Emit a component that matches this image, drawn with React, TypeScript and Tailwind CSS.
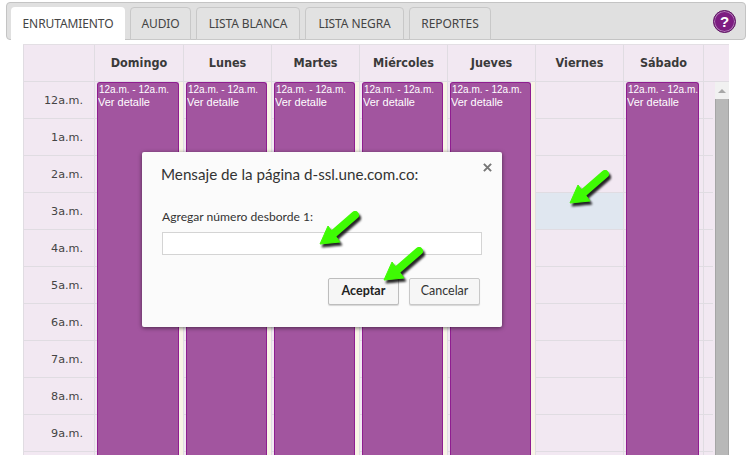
import React from "react";

const hours = ["12a.m.", "1a.m.", "2a.m.", "3a.m.", "4a.m.", "5a.m.", "6a.m.", "7a.m.", "8a.m.", "9a.m.", ""];
const days = [
  { name: "Domingo", w: "w-[89px]", ev: "w-[82px]", on: true, cream: true },
  { name: "Lunes", w: "w-[88px]", ev: "w-[81px]", on: true, cream: true },
  { name: "Martes", w: "w-[88px]", ev: "w-[81px]", on: true, cream: true },
  { name: "Miércoles", w: "w-[88px]", ev: "w-[81px]", on: true, cream: true },
  { name: "Jueves", w: "w-[88px]", ev: "w-[81px]", on: true, cream: true },
  { name: "Viernes", w: "w-[88px]", ev: "", on: false, cream: false },
  { name: "Sábado", w: "w-[80px]", ev: "w-[73px]", on: true, cream: false },
];
const tabs = [
  { t: "AUDIO", w: "w-[61px]" },
  { t: "LISTA BLANCA", w: "w-[104px]" },
  { t: "LISTA NEGRA", w: "w-[99px]" },
  { t: "REPORTES", w: "w-[82px]" },
];

function Arrow({ className }: { className: string }) {
  return (
    <svg
      viewBox="0 0 42 38"
      className={"absolute w-[42px] h-[38px] drop-shadow-[2px_3px_1px_rgba(0,0,0,0.85)] " + className}
    >
      <path d="M9 17 L21 33 L1 35 Z" fill="#3ffb04" stroke="#3ffb04" strokeWidth="1" strokeLinejoin="round" />
      <path d="M13 26 L36 6" fill="none" stroke="#3ffb04" strokeWidth="8" strokeLinecap="round" />
    </svg>
  );
}

export default function App() {
  return (
    <div className="relative w-[753px] h-[455px] overflow-hidden bg-white pt-[2px] font-['Liberation_Sans',sans-serif]">
      {/* tab bar */}
      <div className="ml-[6px] w-[740px] h-[38px] flex items-end gap-[5px] pl-[4px] pr-[8px] bg-[#e0e0e0] border border-[#c4c4c4] rounded-[4px]">
        <div className="w-[114px] h-[33px] -mb-px bg-white rounded-t-[4px] flex items-center justify-center text-[12px] tracking-[-0.1px] text-[#444] font-['Noto_Sans',sans-serif]">
          ENRUTAMIENTO
        </div>
        {tabs.map((t) => (
          <div
            key={t.t}
            className={"h-[33px] -mb-px bg-[#e2e2e2] border border-[#c8c8c8] rounded-t-[4px] flex items-center justify-center text-[12px] tracking-[-0.1px] text-[#444] font-['Noto_Sans',sans-serif] " + t.w}
          >
            {t.t}
          </div>
        ))}
        <div className="ml-auto mb-[6px] mr-[1px] w-[23px] h-[23px] rounded-full bg-[#7d1d82] border border-[#5d1562] shadow-[inset_0_0_0_1px_#b07ab5] flex items-center justify-center text-white font-bold text-[15px] leading-none">
          ?
        </div>
      </div>

      {/* calendar */}
      <div className="ml-[23px] mt-[4px] w-[706px] bg-[#f2e8f2] border-t border-[#e3dfe4]">
        <div className="flex h-[37px] border-b border-[#e0dce2] font-['DejaVu_Sans_Condensed','DejaVu_Sans',sans-serif] text-[12.5px] font-bold text-[#3a3a3a]">
          <div className="w-[71px] border-l border-[#e0dce2]" />
          {days.map((d) => (
            <div key={d.name} className={"flex items-center justify-center pt-[1px] border-l border-[#e0dce2] " + d.w}>
              {d.name}
            </div>
          ))}
          <div className="w-[26px] border-l border-[#e0dce2]" />
        </div>
        <div className="flex">
          <div className="w-[71px] border-l border-[#e0dce2]">
            {hours.map((h, i) => (
              <div
                key={i}
                className="h-[37px] border-b border-[#e0dce2] pr-[11px] pt-[3px] flex items-center justify-end text-[11.2px] text-[#444] font-['DejaVu_Sans',sans-serif]"
              >
                {h}
              </div>
            ))}
          </div>
          {days.map((d) => (
            <div key={d.name} className={"relative border-l border-[#e0dce2] " + d.w}>
              {hours.map((h, i) => (
                <div
                  key={i}
                  className={"h-[37px] border-b border-[#e0dce2] " + (d.name === "Viernes" && h === "3a.m." ? "bg-[#e0e7f0]" : "")}
                />
              ))}
              {d.cream && <div className="absolute top-0 bottom-0 right-0 w-[4px] bg-[#f8f4e6]" />}
              {d.on && (
                <div
                  className={"absolute top-0 left-[2px] h-[420px] bg-[#a2559f] border-x border-t border-[#8f1d90] rounded-t-[3px] pl-[1px] text-white font-['Liberation_Sans',sans-serif] overflow-hidden " + d.ev}
                >
                  <div className="text-[10px] leading-[12px] mt-[1px] whitespace-nowrap">12a.m. - 12a.m.</div>
                  <div className="text-[11px] leading-[13px] whitespace-nowrap -ml-[1px]">Ver detalle</div>
                </div>
              )}
            </div>
          ))}
          <div className="w-[26px] border-l border-[#e0dce2] flex">
            <div className="w-[9px] shrink-0">
              {hours.map((h, i) => (
                <div key={i} className="h-[37px] border-b border-[#e0dce2]" />
              ))}
            </div>
            <div className="ml-[2px] w-[14px] flex flex-col">
              <div className="h-[17px] bg-[#f1f1f1] flex items-center justify-center">
                <div className="w-0 h-0 border-x-[4px] border-x-transparent border-b-[4px] border-b-[#a8a8a8]" />
              </div>
              <div className="flex-1 bg-[#b8b8b8] border-x border-[#a5a5a5]" />
            </div>
          </div>
        </div>
      </div>

      {/* modal */}
      <div className="absolute left-[142px] top-[152px] w-[360px] h-[175px] bg-[#fbfbfb] rounded-[2px] shadow-[0_1px_4px_rgba(0,0,0,0.55)] pl-[20px] pr-[20px] pt-[11px] font-['Lato',sans-serif]">
        <svg viewBox="0 0 10 10" className="absolute right-[10px] top-[11px] w-[9px] h-[9px]">
          <path d="M1 1 L9 9 M9 1 L1 9" stroke="#777" strokeWidth="2.2" fill="none" />
        </svg>
        <div className="text-[15.2px] leading-[22px] -ml-[1px] text-[#333]">Mensaje de la página d-ssl.une.com.co:</div>
        <div className="mt-[24px] text-[12.1px] leading-[16px] text-[#333]">Agregar número desborde 1:</div>
        <div className="mt-[7px] h-[23px] bg-white border border-[#d4d4d4]" />
        <div className="mt-[23px] flex justify-end gap-[10px] pr-[2px]">
          <div className="w-[71px] h-[27px] flex items-center justify-center border border-[#bdbdbd] rounded-[2px] bg-[#f6f6f6] shadow-[0_1px_1px_rgba(0,0,0,0.15)] text-[12.5px] font-bold text-[#222]">
            Aceptar
          </div>
          <div className="w-[71px] h-[27px] flex items-center justify-center border border-[#c8c8c8] rounded-[2px] bg-[#f6f6f6] shadow-[0_1px_1px_rgba(0,0,0,0.15)] text-[12.5px] text-[#333]">
            Cancelar
          </div>
        </div>
      </div>

      <Arrow className="left-[319px] top-[209px]" />
      <Arrow className="left-[383px] top-[245px]" />
      <Arrow className="left-[569px] top-[168px]" />
    </div>
  );
}
